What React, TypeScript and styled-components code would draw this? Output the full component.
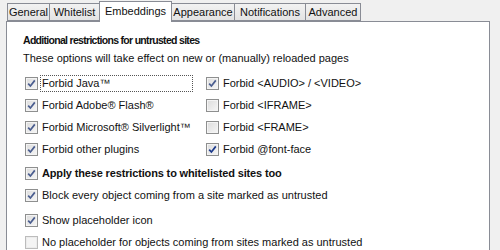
import React from "react";
import styled, { createGlobalStyle } from "styled-components";

const Global = createGlobalStyle`
  html, body { margin: 0; padding: 0; background: #f0f0f0; }
  body { font-family: "Liberation Sans", Arial, sans-serif; font-size: 11px; color: #111; }
`;

const Window = styled.div`
  width: 500px;
  height: 250px;
  overflow: hidden;
  padding: 1px 10px 0 6px;
  box-sizing: border-box;
`;

const TabBar = styled.div`
  display: flex;
  align-items: flex-end;
  height: 20px;
  padding-left: 2px;
  position: relative;
  z-index: 1;
`;

const Tab = styled.div<{ $active?: boolean; $w: number }>`
  box-sizing: border-box;
  width: ${(p) => p.$w}px;
  height: ${(p) => (p.$active ? 21 : 18)}px;
  margin-left: -1px;
  margin-bottom: ${(p) => (p.$active ? -1 : 0)}px;
  border: 1px solid #898c95;
  border-bottom: ${(p) => (p.$active ? "none" : "1px solid #898c95")};
  background: ${(p) =>
    p.$active ? "#ffffff" : "linear-gradient(#f2f2f2, #e3e3e3)"};
  display: flex;
  align-items: ${(p) => (p.$active ? "flex-start" : "center")};
  padding-top: ${(p) => (p.$active ? 2 : 0)}px;
  justify-content: center;
  font-size: 11px;
  line-height: 15px;
  color: #111;
  white-space: nowrap;
`;

const Panel = styled.div`
  box-sizing: border-box;
  width: 484px;
  height: 240px;
  background: #fff;
  border: 1px solid #898c95;
  padding: 10px 0 0 16px;
`;

const Heading = styled.div`
  font-weight: 700;
  font-size: 10.5px;
  letter-spacing: -0.7px;
  line-height: 16px;
`;

const Note = styled.div`
  line-height: 16px;
  margin-top: 2px;
  font-size: 11px;
`;

const Grid = styled.div`
  display: grid;
  grid-template-columns: 181px 1fr;
  row-gap: 6px;
  margin-top: 9px;
  margin-left: 2px;
`;

const Stack = styled.div<{ $mt: number }>`
  display: flex;
  flex-direction: column;
  margin-left: 2px;
  margin-top: ${(p) => p.$mt}px;
`;

const Row = styled.label<{ $mt?: number }>`
  display: flex;
  align-items: center;
  height: 16px;
  margin-top: ${(p) => p.$mt ?? 0}px;
`;

const Box = styled.span<{ $disabled?: boolean }>`
  box-sizing: border-box;
  width: 13px;
  height: 13px;
  flex: none;
  border: 1px solid ${(p) => (p.$disabled ? "#bcbcbc" : "#8e8f8f")};
  background: ${(p) =>
    p.$disabled ? "#f4f4f4" : "linear-gradient(135deg, #dcdcdc, #f6f6f6)"};
  box-shadow: inset 0 0 0 1px ${(p) => (p.$disabled ? "#ececec" : "#f4f4f4")};
  display: flex;
  align-items: center;
  justify-content: center;
  margin-right: 4px;
`;

const Label = styled.span<{ $focus?: boolean; $bold?: boolean; $w?: number }>`
  line-height: 15px;
  font-weight: ${(p) => (p.$bold ? 700 : 400)};
  letter-spacing: ${(p) => (p.$bold ? "-0.15px" : "0")};
  font-size: 11px;
  padding: 0 1px;
  border: 1px dotted ${(p) => (p.$focus ? "#555" : "transparent")};
  margin-left: -2px;
  box-sizing: border-box;
  width: ${(p) => (p.$w ? `${p.$w}px` : "auto")};
  white-space: nowrap;
`;

const Check = ({ strong }: { strong?: boolean }) => (
  <svg width="9" height="9" viewBox="0 0 9 9">
    <path
      d="M1.2 4.6 L3.4 7 L7.8 1.4"
      fill="none"
      stroke={strong ? "#1c3a8c" : "#4a5d8f"}
      strokeWidth="1.7"
    />
  </svg>
);

type CbProps = {
  checked?: boolean;
  strong?: boolean;
  disabled?: boolean;
  focus?: boolean;
  bold?: boolean;
  mt?: number;
  w?: number;
  children: React.ReactNode;
};

const CheckRow = ({ checked, strong, disabled, focus, bold, mt, w, children }: CbProps) => (
  <Row $mt={mt}>
    <Box $disabled={disabled}>{checked && <Check strong={strong} />}</Box>
    <Label $focus={focus} $bold={bold} $w={w}>
      {children}
    </Label>
  </Row>
);

const tabs: [string, number][] = [
  ["General", 43],
  ["Whitelist", 51],
  ["Embeddings", 73],
  ["Appearance", 64],
  ["Notifications", 72],
  ["Advanced", 56],
];

export default function App() {
  return (
    <Window>
      <Global />
      <TabBar>
        {tabs.map(([t, w]) => (
          <Tab key={t} $w={w} $active={t === "Embeddings"}>
            {t}
          </Tab>
        ))}
      </TabBar>
      <Panel>
        <Heading>Additional restrictions for untrusted sites</Heading>
        <Note>These options will take effect on new or (manually) reloaded pages</Note>
        <Grid>
          <CheckRow checked focus w={153}>Forbid Java™</CheckRow>
          <CheckRow checked>Forbid &lt;AUDIO&gt; / &lt;VIDEO&gt;</CheckRow>
          <CheckRow checked>Forbid Adobe® Flash®</CheckRow>
          <CheckRow>Forbid &lt;IFRAME&gt;</CheckRow>
          <CheckRow checked>Forbid Microsoft® Silverlight™</CheckRow>
          <CheckRow>Forbid &lt;FRAME&gt;</CheckRow>
          <CheckRow checked>Forbid other plugins</CheckRow>
          <CheckRow checked strong>Forbid @font-face</CheckRow>
        </Grid>
        <Stack $mt={8}>
          <CheckRow checked bold>Apply these restrictions to whitelisted sites too</CheckRow>
          <CheckRow checked mt={6}>Block every object coming from a site marked as untrusted</CheckRow>
          <CheckRow checked mt={9}>Show placeholder icon</CheckRow>
          <CheckRow disabled mt={6}>No placeholder for objects coming from sites marked as untrusted</CheckRow>
        </Stack>
      </Panel>
    </Window>
  );
}
